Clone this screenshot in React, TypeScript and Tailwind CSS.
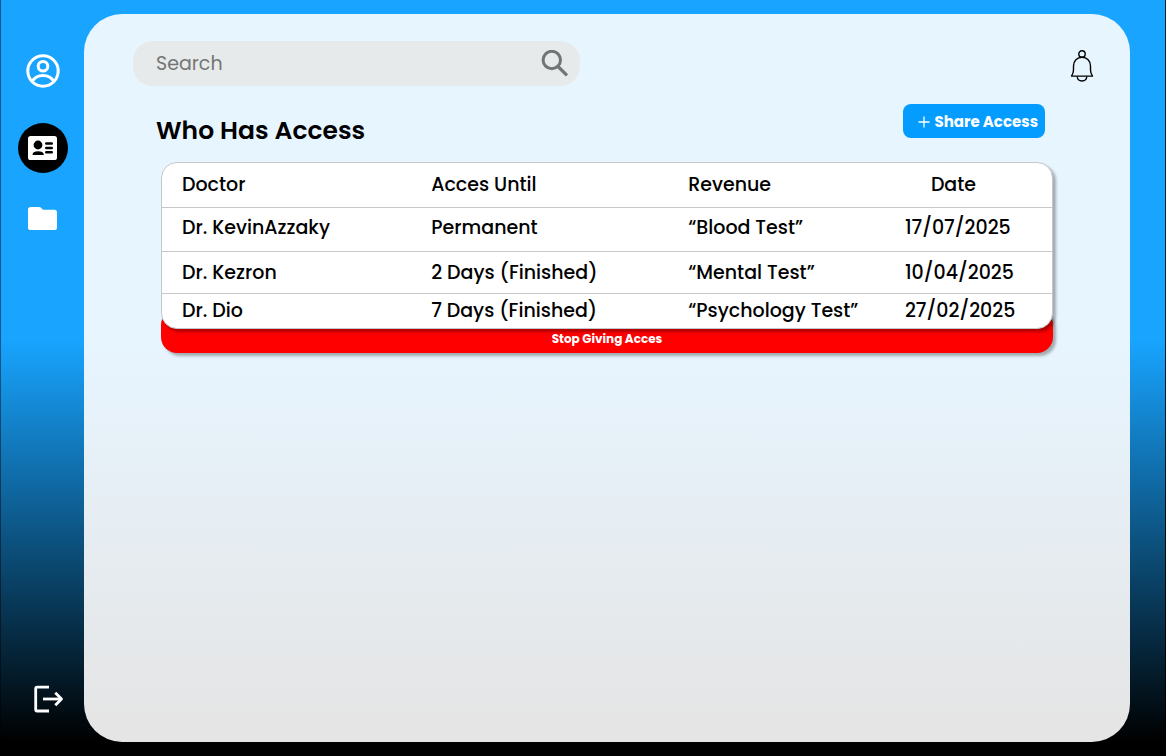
import React from "react";

const rows = [
  { doctor: "Dr. KevinAzzaky", until: "Permanent", revenue: "“Blood Test”", date: "17/07/2025", height: "h-11", pad: "pb-0.5" },
  { doctor: "Dr. Kezron", until: "2 Days (Finished)", revenue: "“Mental Test”", date: "10/04/2025", height: "h-[42px]", pad: "pt-0.5" },
  { doctor: "Dr. Dio", until: "7 Days (Finished)", revenue: "“Psychology Test”", date: "27/02/2025", height: "h-[35px]", pad: "" },
];

function ProfileIcon() {
  return (
    <svg width="34" height="34" viewBox="0 0 34 34" fill="none" stroke="#fff" strokeWidth="3" aria-hidden="true">
      <circle cx="17" cy="17" r="15.2" />
      <circle cx="17" cy="12.3" r="4.8" />
      <path d="M6.2 27.4C8.4 23.4 12.2 21.4 17 21.4s8.6 2 10.8 6" />
    </svg>
  );
}

function IdCardIcon() {
  return (
    <svg width="29" height="24" viewBox="0 0 29 24" aria-hidden="true">
      <rect width="29" height="24" rx="2.6" fill="#fff" />
      <circle cx="10" cy="9" r="4.4" fill="#000" />
      <path d="M4.6 19v-.8c0-2 2.4-3 5.5-3s5.6 1 5.6 3v.8z" fill="#000" />
      <path d="M18.2 7.5h5.6M18.2 12h5.6M18.2 16.3h5.6" stroke="#000" strokeWidth="2.4" strokeLinecap="round" />
    </svg>
  );
}

function FolderIcon() {
  return (
    <svg width="29" height="24" viewBox="0 0 29 24" fill="#fff" aria-hidden="true">
      <path d="M2.6 0h8.6c.7 0 1.3.2 1.8.7L15 2.8h11.4A2.6 2.6 0 0 1 29 5.4v15.1a2.6 2.6 0 0 1-2.6 2.6H2.6A2.6 2.6 0 0 1 0 20.5V2.6A2.6 2.6 0 0 1 2.6 0z" />
    </svg>
  );
}

function LogoutIcon() {
  return (
    <svg width="30" height="28" viewBox="0 0 30 28" fill="none" stroke="#fff" strokeWidth="2.8" aria-hidden="true">
      <path d="M15 2.2H3.2a1.5 1.5 0 0 0-1.5 1.5v20.8a1.5 1.5 0 0 0 1.5 1.5H15" />
      <path d="M9 14h18.500" />
      <path d="M21.3 7.8 27.5 14l-6.2 6.2" strokeLinejoin="round" />
    </svg>
  );
}

function BellIcon() {
  return (
    <svg width="24" height="32" viewBox="0 0 24 32" fill="none" stroke="#000" strokeWidth="1.4" aria-hidden="true">
      <circle cx="12" cy="4" r="3.2" />
      <path d="M1.5 26.1c1.5-2.1 2-4 2-6.3v-3.800c0-5 3.500-8.800 8.500-8.800s8.500 3.800 8.500 8.800v3.800c0 2.300.5 4.200 2 6.300z" strokeLinejoin="round" />
      <path d="M7.2 26.5c.2 2.7 2.2 4.5 4.8 4.5s4.6-1.8 4.8-4.5" />
    </svg>
  );
}

function SearchIcon() {
  return (
    <svg width="28" height="28" viewBox="0 0 28 28" fill="none" stroke="#737575" strokeWidth="3" aria-hidden="true">
      <circle cx="10.8" cy="10" r="8.7" />
      <path d="m17 16.5 9 8.8" strokeWidth="3.2" />
    </svg>
  );
}

export default function App() {
  return (
    <div className="flex min-h-screen border-r border-l border-r-black/80 border-l-black/45 bg-linear-to-b/srgb from-[#18a4ff] from-45% to-black to-98% font-[Poppins,Inter,sans-serif] text-black">
      <nav aria-label="Main" className="flex w-[83px] shrink-0 flex-col items-center pt-[54px] pb-[43px]">
        <a href="#profile" aria-label="Profile"><ProfileIcon /></a>
        <a href="#access" aria-label="Access" aria-current="page" className="mt-[35px] flex size-[50px] items-center justify-center rounded-full bg-black">
          <IdCardIcon />
        </a>
        <a href="#files" aria-label="Files" className="mt-[34px]"><FolderIcon /></a>
        <a href="#logout" aria-label="Log out" className="mt-auto ml-3"><LogoutIcon /></a>
      </nav>

      <main className="my-3.5 mr-[35px] min-w-0 flex-1 rounded-[38px] bg-linear-to-b/srgb from-[#e7f5ff] from-45% to-[#e5e5e5] to-98% pt-[27px] pr-9 pl-[49px]">
        <header className="flex items-center justify-between">
          <form role="search" className="flex h-[45px] w-full max-w-[447px] items-center rounded-[20px] bg-[#e7eaea] pr-[11px] pl-[23px]">
            <input type="search" aria-label="Search" placeholder="Search" className="min-w-0 flex-1 bg-transparent pt-0.5 text-[19px] outline-none placeholder:text-[#737575]" />
            <button type="button" aria-label="Submit search"><SearchIcon /></button>
          </form>
          <button type="button" aria-label="Notifications" className="mt-1"><BellIcon /></button>
        </header>

        <section className="mt-[18px] mr-[41px] ml-[23px]">
          <div className="flex h-[43px] justify-between pr-2">
            <h1 className="self-end text-[25px] leading-8 font-semibold">Who Has Access</h1>
            <button type="button" className="flex h-[34px] w-[142px] items-center justify-end gap-1 rounded-lg bg-[#049cff] pt-0.5 pr-[7px] text-[15px] font-bold whitespace-nowrap text-white">
              <svg width="12" height="12" viewBox="0 0 12 12" stroke="#fff" strokeWidth="1.3" aria-hidden="true"><path d="M6 .5v11M.5 6h11" /></svg>
              Share Access
            </button>
          </div>

          <div className="mt-[15px] ml-[5px]">
            <div className="relative z-10 overflow-hidden rounded-2xl border border-[#c4c8ca] bg-white shadow-[3px_3px_3px_rgba(0,0,0,0.3)]">
              <table className="w-full table-fixed text-left text-[19px] leading-7 font-medium">
                <thead>
                  <tr className="h-11 border-b border-[#c8c8c8]">
                    <th scope="col" className="w-[28%] pl-5 font-medium">Doctor</th>
                    <th scope="col" className="w-[29%] pl-5 font-medium">Acces Until</th>
                    <th scope="col" className="w-[24%] pl-[19px] font-medium">Revenue</th>
                    <th scope="col" className="w-[19%] pl-12 font-medium">Date</th>
                  </tr>
                </thead>
                <tbody>
                  {rows.map((row) => (
                    <tr key={row.doctor} className={`${row.height} border-b border-[#c8c8c8] last:border-b-0`}>
                      <td className={`pl-5 ${row.pad}`}>{row.doctor}</td>
                      <td className={`pl-5 ${row.pad}`}>{row.until}</td>
                      <td className={`pl-[19px] ${row.pad}`}>{row.revenue}</td>
                      <td className={`pl-[22px] ${row.pad}`}>{row.date}</td>
                    </tr>
                  ))}
                </tbody>
              </table>
            </div>
            <button type="button" className="-mt-5 block h-11 w-full rounded-2xl bg-[#fe0000] pt-4 text-[12px] font-bold text-white shadow-[3px_3px_3px_rgba(0,0,0,0.3)]">
              Stop Giving Acces
            </button>
          </div>
        </section>
      </main>
    </div>
  );
}
